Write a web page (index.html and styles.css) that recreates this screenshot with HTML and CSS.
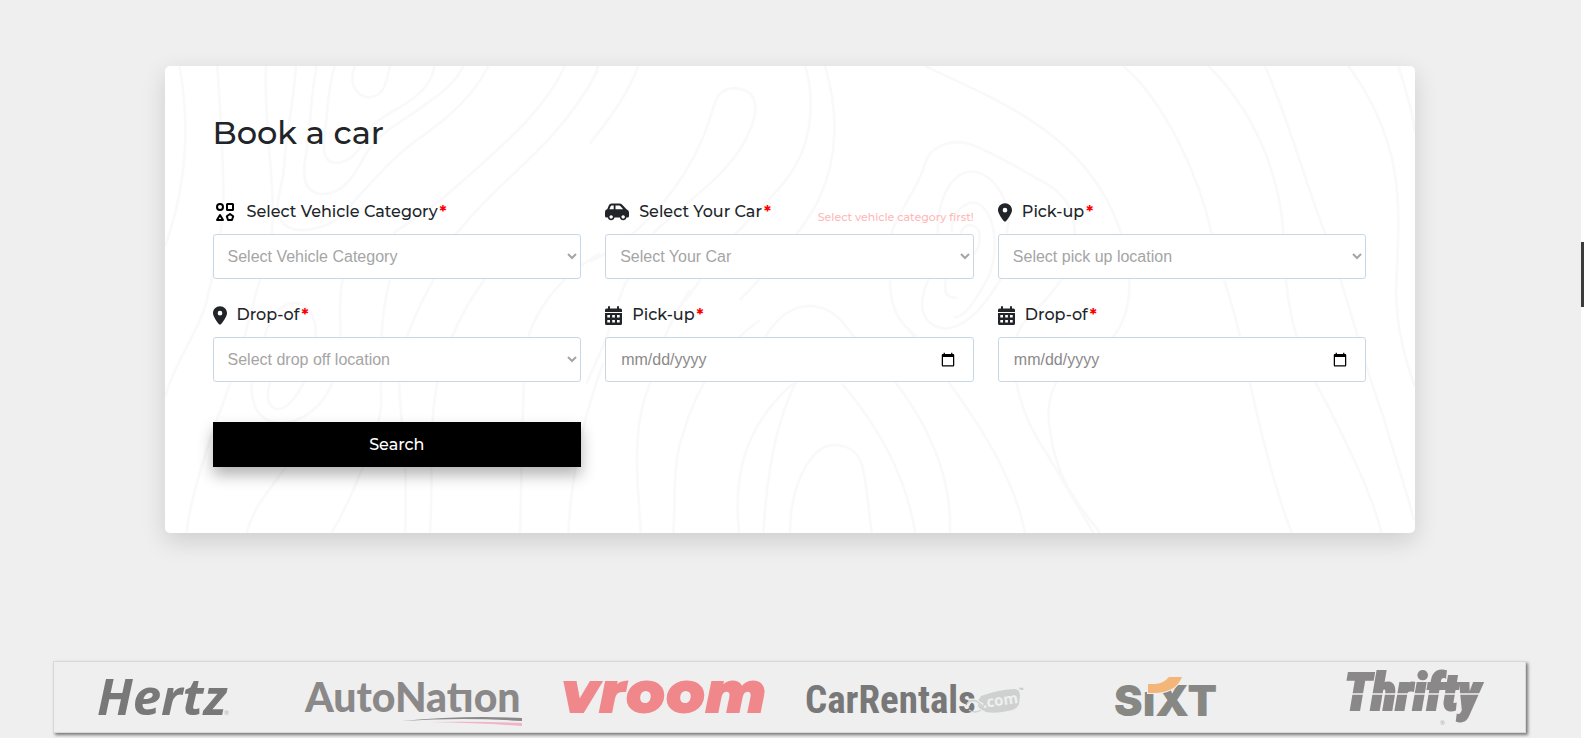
FILE: index.html
```html
<!DOCTYPE html>
<html lang="en">
<head>
<meta charset="utf-8">
<meta name="viewport" content="width=device-width, initial-scale=1">
<title>Book a car</title>
<link rel="stylesheet" href="styles.css">
</head>
<body>
<svg class="sprite" aria-hidden="true">
  <symbol id="i-pin" viewBox="0 0 384 512"><path fill-rule="evenodd" d="M215.700 499.200C267 435 384 279.400 384 192C384 86 298 0 192 0S0 86 0 192c0 87.400 117 243 168.300 307.200c12.300 15.300 35.100 15.300 47.400 0zM192 128a64 64 0 1 1 0 128 64 64 0 1 1 0-128z"/></symbol>
  <symbol id="i-cal" viewBox="0 0 17 19"><path fill-rule="evenodd" d="M3 1Q3 0 4 0T5 1V2.500H12V1Q12 0 13 0T14 1V2.500H15.500Q17 2.500 17 4V6H0V4Q0 2.500 1.500 2.500H3ZM0 7H17V17.500Q17 19 15.500 19H1.500Q0 19 0 17.500ZM2.300 9V11.500H5V9ZM7.200 9V11.500H9.900V9ZM12 9V11.500H14.700V9ZM2.300 14V16.500H5V14ZM7.200 14V16.500H9.900V14ZM12 14V16.500H14.700V14Z"/></symbol>
  <symbol id="i-car" viewBox="0 0 24 17"><path fill-rule="evenodd" d="M6.500 0H14.500Q16 0 17 1L21.500 5.800Q24 6.500 24 9V12.500Q24 14 22.500 14H21.400A3.300 3.300 0 0 1 14.900 14H9.400A3.300 3.300 0 0 1 2.900 14H1.500Q0 14 0 12.500V8.500Q0 6 2.200 5.700L4 1.600Q4.700 0 6.500 0ZM5.800 2.400 4.400 5.700H8.700V1.900H6.600Q6 1.900 5.800 2.400ZM10.500 1.900V5.700H18.200L15 2.300Q14.600 1.900 14.100 1.900ZM6.150 11.700a1.700 1.700 0 1 0 .01 0ZM18.150 11.700a1.700 1.700 0 1 0 .01 0Z"/></symbol>
  <symbol id="i-shapes" viewBox="0 0 24 18"><g fill="none" stroke="#000" stroke-width="2"><circle cx="7" cy="4" r="3"/><rect x="14" y="1" width="6" height="6" rx=".5"/><path stroke-linejoin="round" d="M7 12 4 17H10ZM17 11 20.200 13.300 19 17H15L13.800 13.300Z"/></g></symbol>
</svg>

<main class="page">
  <section class="card">
    <svg class="contours" viewBox="0 0 3750 1401" preserveAspectRatio="xMidYMid slice" aria-hidden="true">
      <g transform="translate(-15 -18)">
        <path d="M58 18C82 150 95 330 15 560M172 18C180 150 190 260 190 400C190 540 155 650 140 725C110 830 50 890 15 1010M318 18C310 200 350 390 335 520C325 610 300 650 288 700C250 850 210 980 170 1080C130 1200 90 1320 80 1418"/>
        <path d="M408 18C395 180 375 240 372 320C368 390 335 440 365 485C400 530 500 510 550 460C650 350 690 300 770 240C860 180 940 110 985 18M470 18C455 90 450 200 440 270C430 330 420 390 480 402C560 405 590 330 625 270C680 200 730 185 800 130C860 90 890 60 910 18M524 18C500 100 500 190 492 250C488 300 510 312 540 308C600 295 610 230 645 190C700 145 760 130 800 75C815 55 820 40 823 18M585 18C560 80 600 110 625 112C675 112 680 60 690 18"/>
        <path d="M1215 18C1150 160 1010 270 900 370S750 480 700 520M1315 30C1210 220 1100 300 1000 400S910 500 885 525M550 650C530 730 545 790 540 830M690 660C660 770 665 850 663 950S670 1020 655 1085M825 650C760 770 710 880 718 980C720 1080 745 1180 735 1418M980 650C890 770 840 900 825 1010C805 1150 820 1280 810 1418M1320 580C1180 660 1095 790 1095 900C1085 1080 1085 1270 1080 1418M1330 910C1265 1080 1235 1240 1225 1418"/>
        <path d="M330 780C380 710 440 710 465 790C480 870 420 1040 355 1048C300 1040 325 950 370 880M520 960C480 1080 340 1130 290 1050C250 970 300 880 330 780M400 1190C330 1290 285 1330 260 1418M620 1190C590 1270 550 1360 515 1418"/>
      </g>
      <g transform="translate(1275 -18)">
        <path d="M25 18 0 75M145 18C110 110 55 180 0 250M0 605C170 520 280 370 340 230C380 130 370 90 430 85C500 85 510 140 480 210C430 340 290 420 190 520C150 580 110 650 85 725M645 18C675 110 665 230 620 310C570 400 490 460 430 530C370 600 330 660 285 725M705 18C745 150 745 290 690 410C650 500 520 650 450 720"/>
        <path d="M900 540C910 470 990 380 1005 310C1020 260 1080 235 1140 252C1200 275 1290 325 1330 350C1430 395 1455 450 1455 530C1450 650 1365 720 1300 790C1240 870 1280 1050 1370 1180L1510 1418M1005 18C1200 110 1400 190 1520 370C1620 520 1655 720 1570 830C1470 900 1350 940 1380 1110C1395 1240 1450 1320 1530 1418M1045 535C1035 430 1080 340 1140 335C1220 335 1270 440 1250 520M1085 515C1085 470 1110 430 1150 428C1210 435 1230 550 1200 640C1160 720 1120 780 1090 770M1115 540C1105 500 1140 480 1165 510C1180 560 1150 600 1115 590ZM900 660C900 750 930 790 980 830M1020 650C960 770 1030 810 1075 805C1160 790 1210 690 1250 630M1070 650C1055 710 1080 715 1100 712"/>
        <path d="M60 800C40 870 0 940-10 970M300 690C250 770 220 820 180 970C120 1110 145 1280 152 1418M510 780C410 850 320 970 280 1120C245 1210 258 1320 250 1418M520 840C600 700 720 710 790 830C900 930 1090 1150 1080 1418M610 970C460 1100 430 1250 447 1418M640 930C560 1050 530 1250 520 1418M755 970C850 1080 950 1240 975 1418M600 1418C600 1280 660 1150 740 1155C830 1165 820 1230 845 1418M950 800C1080 970 1260 1190 1305 1418"/>
      </g>
      <g transform="translate(2445 -18)">
        <path d="M430 18C560 130 660 360 695 520C720 640 760 730 780 830C820 1020 870 1250 935 1418M685 18C820 150 900 340 910 520C915 780 960 890 1040 1030C1110 1170 1170 1290 1205 1418M855 18C940 220 970 350 1035 520C1120 760 1140 880 1210 1070C1240 1180 1280 1290 1302 1380M1105 18C1290 270 1255 480 1248 690C1250 820 1280 910 1305 980M1255 18C1280 100 1300 160 1305 220"/>
      </g>
    </svg>

    <form class="booking" onsubmit="return false">
      <h1 class="title">Book a car</h1>
      <div class="fields">
        <div class="field">
          <label class="label" for="category"><svg class="ico-wide"><use href="#i-shapes"/></svg><span>Select Vehicle Category<b class="req">*</b></span></label>
          <select class="control" id="category"><option>Select Vehicle Category</option></select>
        </div>
        <div class="field">
          <div class="label-row">
            <label class="label" for="car"><svg class="ico-wide"><use href="#i-car"/></svg><span>Select Your Car<b class="req">*</b></span></label>
            <small class="hint">Select vehicle category first!</small>
          </div>
          <select class="control" id="car"><option>Select Your Car</option></select>
        </div>
        <div class="field">
          <label class="label" for="pick"><svg class="ico-pin"><use href="#i-pin"/></svg><span>Pick-up<b class="req">*</b></span></label>
          <select class="control" id="pick"><option>Select pick up location</option></select>
        </div>
        <div class="field">
          <label class="label" for="drop"><svg class="ico-pin"><use href="#i-pin"/></svg><span>Drop-of<b class="req">*</b></span></label>
          <select class="control" id="drop"><option>Select drop off location</option></select>
        </div>
        <div class="field">
          <label class="label" for="pick-date"><svg class="ico-cal"><use href="#i-cal"/></svg><span>Pick-up<b class="req">*</b></span></label>
          <input class="control date" type="date" id="pick-date">
        </div>
        <div class="field">
          <label class="label" for="drop-date"><svg class="ico-cal"><use href="#i-cal"/></svg><span>Drop-of<b class="req">*</b></span></label>
          <input class="control date" type="date" id="drop-date">
        </div>
        <button class="search" type="submit">Search</button>
      </div>
    </form>
  </section>

  <section class="brands" aria-label="Partners">
    <div class="track">
      <svg class="logo" viewBox="0 0 220 60"><text class="hertz" x="44" y="48">Hertz</text><text class="mark" x="171" y="48">®</text></svg>
      <svg class="logo" viewBox="0 0 220 60"><text class="autonation" x="1" y="45">AutoNatıon</text><path fill="#8a8888" d="M98 54Q160 48 218 51V54Q160 50 98 54Z"/><path fill="#efb5c6" d="M125 55Q175 54 218 56V59Q180 56 125 55Z"/></svg>
      <svg class="logo" viewBox="0 0 220 60"><text class="vroom" x="7" y="46">vroom</text></svg>
      <svg class="logo" viewBox="0 0 220 60"><text class="carrentals" x="0" y="46">CarRentals</text><path fill="#cfd1d0" d="M176 29Q192 23 209 22Q215 22 215 29L214 37Q212 43 203 44Q190 47 181 45L174 41Q171 35 176 29Z"/><path fill="none" stroke="#efefef" stroke-width="3" d="M163 39Q164 33 171 34L178 38"/><path fill="none" stroke="#cfd1d0" stroke-width="1.500" d="M162 37Q165 32 171 34L178 39M164 43Q170 47 176 43"/><text class="dotcom" x="178" y="41" transform="rotate(-8 178 41)">.com</text><text class="mark" x="214" y="25">™</text></svg>
      <svg class="logo" viewBox="0 0 220 60"><text class="sixt" x="59" y="49">SıXT</text><path fill="#f3b678" stroke="#efefef" stroke-width="2" paint-order="stroke" d="M93 17V26H99C112 26 123 21 127 10H114C108 17 102 17 93 17Z"/></svg>
      <svg class="logo" viewBox="0 0 220 60"><text class="thrifty" x="38" y="43">Thrifty</text><path stroke="#efefef" stroke-width="1.500" d="M38 27H182"/><text class="mark" x="134" y="58">®</text></svg>
    </div>
  </section>
</main>
<div class="scrollbar" aria-hidden="true"><div class="thumb"></div></div>
</body>
</html>
```

FILE: styles.css
```css
* { box-sizing: border-box; }

body {
  margin: 0;
  background: #efefef;
  color: #212529;
  font: 500 16px/24px Montserrat, Inter, sans-serif;
}

.sprite { display: none; }

.page {
  margin-right: 3px;
  padding: 66px 55px 5px 53px;
}

.card {
  position: relative;
  max-width: 1250px;
  margin: 0 auto;
  padding: 48px 48px 66px;
  background: #fff;
  border-radius: 5px;
  box-shadow: 0 8px 24px rgba(0, 0, 0, 0.14);
}

.contours {
  position: absolute;
  inset: 0;
  width: 100%;
  height: 100%;
  border-radius: 5px;
  fill: none;
  stroke: #f9f9f9;
  stroke-width: 8;
}

.booking { position: relative; }

.title {
  margin: 0 0 48px;
  font-size: 32px;
  font-weight: 500;
  line-height: 38px;
}

.fields {
  display: grid;
  grid-template-columns: repeat(3, minmax(0, 1fr));
  gap: 24px;
}

.field {
  display: flex;
  flex-direction: column;
  gap: 10px;
}

.label-row {
  display: flex;
  justify-content: space-between;
  height: 24px;
}

.label {
  display: flex;
  align-items: center;
  gap: 10px;
  height: 24px;
}

.label svg { fill: #212529; }
.ico-wide { width: 24px; height: 18px; }
.ico-pin { width: 14px; height: 19px; }
.ico-cal { width: 17px; height: 19px; }

.req {
  margin-left: 2px;
  color: #f00;
}

.hint {
  padding-top: 5px;
  color: #ffb8b8;
  font-size: 11px;
}

.control {
  width: 100%;
  height: 45px;
  padding: 0 10px;
  border: 1px solid #c8d7e6;
  border-radius: 3px;
  background: #fff;
  color: #a5a5a5;
  font: 16px "Liberation Sans", Arial, sans-serif;
}

.date {
  padding: 0 15px;
  color: #8a8a8a;
}

.date::-webkit-datetime-edit-month-field,
.date::-webkit-datetime-edit-day-field,
.date::-webkit-datetime-edit-year-field {
  padding: 0;
}

.search {
  height: 45px;
  margin-top: 16px;
  border: 0;
  background: #000;
  color: #fff;
  font: inherit;
  box-shadow: 0 8px 14px rgba(0, 0, 0, 0.3);
}

.brands {
  margin-top: 128px;
  border: 1px solid #d8d8d8;
  box-shadow: 2px 2px 3px #777;
}

.track {
  display: grid;
  grid-template-columns: repeat(6, 1fr);
  justify-items: center;
  margin: 0 -16px;
  padding: 5px 0;
}

.logo {
  display: block;
  width: 220px;
  height: 60px;
  overflow: visible;
}

.hertz { font: italic 700 51px "Open Sans", sans-serif; fill: #787878; }
.autonation { font: 900 41px Lato, sans-serif; fill: #8a8888; }
.vroom { font: italic 900 59px Montserrat, sans-serif; fill: #f0878b; }
.carrentals { font: 700 39px "Roboto Condensed", Roboto, sans-serif; fill: #787878; }
.dotcom { font: 700 15px "Open Sans", sans-serif; fill: #efefef; }
.sixt { font: 900 43px Inter, sans-serif; fill: #878884; }
.thrifty { font: italic 900 51px "Roboto Condensed", Roboto, sans-serif; fill: #8a8888; stroke: #8a8888; stroke-width: 2; }
.mark { font: 6px "Open Sans", sans-serif; fill: #b0b0b0; }

.scrollbar {
  position: fixed;
  top: 0;
  right: 0;
  bottom: 0;
  width: 3px;
  background: #fff;
}

.thumb {
  height: 65px;
  margin-top: 242px;
  background: #3c3c3c;
}
```
